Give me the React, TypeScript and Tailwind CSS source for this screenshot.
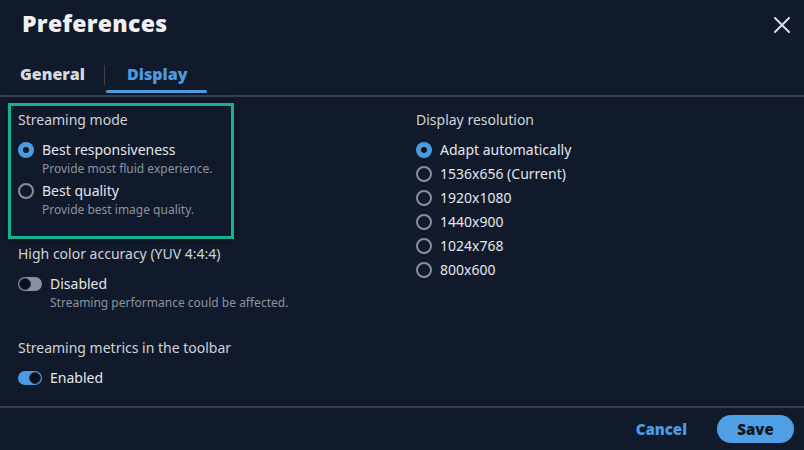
import React from 'react';

const Radio = ({ checked }: { checked?: boolean }) =>
    checked ? (
        <span className="w-4 h-4 rounded-full bg-[#4c9be2] flex items-center justify-center shrink-0">
            <span className="w-[6px] h-[6px] rounded-full bg-[#0f1724]" />
        </span>
    ) : (
        <span className="w-4 h-4 rounded-full border-2 border-[#868e9a] shrink-0" />
    );

const Toggle = ({ on }: { on?: boolean }) => (
    <span
        className={`w-6 h-[14px] rounded-full flex items-center px-[1px] shrink-0 ${on ? 'bg-[#4c9be2] justify-end' : 'bg-[#8a919c] justify-start'}`}
    >
        <span className="w-3 h-3 rounded-full bg-[#0b111c] border border-[#2a3140]" />
    </span>
);

const resolutions = ['Adapt automatically', '1536x656 (Current)', '1920x1080', '1440x900', '1024x768', '800x600'];

export default function App() {
    return (
        <div className="w-[804px] h-[450px] bg-[#111a2a] flex flex-col font-['Noto_Sans',sans-serif] text-[#e3e6eb] overflow-hidden">
            {/* Header */}
            <div className="h-[46px] flex items-center justify-between pl-[22px] pr-[14px]">
                <h1 className="font-['Open_Sans',sans-serif] font-extrabold text-[23px] text-[#eef0f3] tracking-[0.3px]">Preferences</h1>
                <svg width="16" height="16" viewBox="0 0 16 16" className="text-[#d9dde3] mt-[4px]">
                    <path d="M1 1 L15 15 M15 1 L1 15" stroke="currentColor" strokeWidth="2" strokeLinecap="square" />
                </svg>
            </div>

            {/* Tabs */}
            <div className="h-[51px] flex items-end border-b-2 border-[#373f4d] pl-[20px]">
                <div className="h-full flex items-center pt-[6px] text-[16px] font-['Open_Sans',sans-serif] font-extrabold text-[#d6dae0] pr-[19px]">
                    General
                </div>
                <div className="w-px h-[20px] bg-[#3a4250] self-center mt-[8px]" />
                <div className="h-full flex flex-col items-center justify-end ml-[1px]">
                    <div className="flex-1 flex items-center pt-[11px] pl-[21px] pr-[20px] text-[16px] font-['Open_Sans',sans-serif] font-extrabold text-[#4c9be2]">
                        Display
                    </div>
                    <div className="w-full h-[3px] rounded-full bg-[#4c9be2] mb-[2px]" />
                </div>
            </div>

            {/* Content */}
            <div className="flex-1 flex pt-[6px]">
                <div className="w-[408px] pl-[8px] flex flex-col">
                    <div className="w-[226px] border-[3px] border-[#12b297] shadow-[0_0_6px_rgba(0,0,0,0.6)] pl-[7px] pt-[4px] pb-[17px]">
                        <div className="text-[14px] text-[#cfd3d9] leading-[20px]">Streaming mode</div>
                        <div className="mt-[10px] flex items-center gap-2">
                            <Radio checked />
                            <span className="text-[14px] leading-[20px]">Best responsiveness</span>
                        </div>
                        <div className="pl-6 text-[12px] leading-[18px] text-[#8c939e]">Provide most fluid experience.</div>
                        <div className="mt-[3px] flex items-center gap-2">
                            <Radio />
                            <span className="text-[14px] leading-[20px]">Best quality</span>
                        </div>
                        <div className="pl-6 text-[12px] leading-[18px] text-[#8c939e]">Provide best image quality.</div>
                    </div>

                    <div className="pl-[10px] mt-[5px]">
                        <div className="text-[14px] text-[#cfd3d9] leading-[20px]">High color accuracy (YUV 4:4:4)</div>
                        <div className="mt-[10px] flex items-center gap-2">
                            <Toggle />
                            <span className="text-[14px] leading-[20px]">Disabled</span>
                        </div>
                        <div className="pl-8 text-[12px] leading-[18px] text-[#8c939e]">Streaming performance could be affected.</div>

                        <div className="mt-[26px] text-[14px] text-[#cfd3d9] leading-[20px]">Streaming metrics in the toolbar</div>
                        <div className="mt-[10px] flex items-center gap-2">
                            <Toggle on />
                            <span className="text-[14px] leading-[20px]">Enabled</span>
                        </div>
                    </div>
                </div>

                <div className="pl-[8px] pt-[7px] flex flex-col">
                    <div className="text-[14px] text-[#cfd3d9] leading-[20px]">Display resolution</div>
                    <div className="mt-[10px] flex flex-col gap-[4px]">
                        {resolutions.map((r, i) => (
                            <div key={r} className="flex items-center gap-2">
                                <Radio checked={i === 0} />
                                <span className="text-[14px] leading-[20px]">{r}</span>
                            </div>
                        ))}
                    </div>
                </div>
            </div>

            {/* Footer */}
            <div className="h-[44px] border-t-2 border-[#373f4d] flex items-center justify-end pr-[10px] gap-[30px] font-['Open_Sans',sans-serif] font-extrabold text-[15px]">
                <button className="text-[#4c9be2] pt-[1px]">Cancel</button>
                <button className="w-[77px] h-[28px] rounded-full bg-[#4f9fe4] text-[#0f1724]">Save</button>
            </div>
        </div>
    );
}
